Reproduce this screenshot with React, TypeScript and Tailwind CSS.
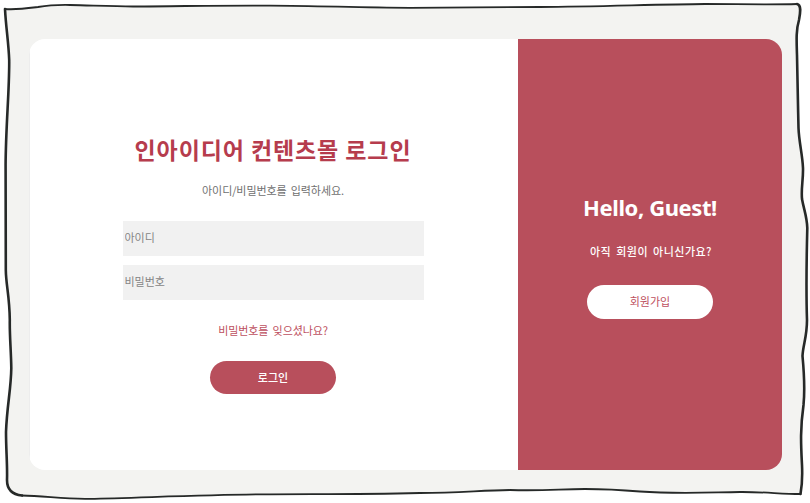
import React from "react";

const top =
  "5,9 C16,10 30,8 38,7 C50,5 60,4.8 70,5 C95,5.6 115,6.6 135,6.5 C180,6.3 225,5.2 270,5.6 C320,5.8 355,7.5 410,7.8 C450,7.8 500,7 540,7 C600,6.5 660,4.3 705,4 C735,4 770,4.8 797,4";
const right =
  "C802,5 800,14 799,20 C796,30 796.5,40 797,55 C797.5,85 798,105 798.5,128 C799,142 802.5,155 803,168 C803.3,180 801,188 802,199 C804,210 807,217 807.3,228 C806.5,260 806,290 807,320 C807,337 803,345 802.5,356 C804,372 805,390 803.5,405 C800,430 801,445 802,465 C802.5,476 802,486 800.5,494";
const bottom =
  "C780,494 765,491.8 740,492 C705,492.5 675,494 640,491.5 C620,489.8 605,489 585,489 C560,489 545,491 510,490 C480,490.3 460,493 420,493 C360,494.5 325,494 270,494.3 C210,494.5 135,498 90,498.8 C65,499.5 45,495.8 22,495.5";
const left =
  "C12,494.5 7,490 7,480 C7.5,465 6,450 6,432 C7,405 11,390 11.3,368 C11,350 9.5,335 9.8,320 C9.5,296 6,285 5.8,270 L5.6,165 C5.8,125 9.5,90 9.2,60 C8.5,42 6,28 5,9";

function SketchFrame() {
  return (
    <svg
      className="absolute inset-0 -z-10"
      width="810"
      height="503"
      fill="none"
      stroke="#262928"
      strokeLinecap="round"
    >
      <path d={`M${top} ${right} ${bottom} ${left} Z`} fill="#f3f3f1" stroke="none" />
      <path d={`M${top}`} strokeWidth="1.8" />
      <path d={`M797,4 ${right}`} strokeWidth="2.6" />
      <path d={`M800.5,494 ${bottom}`} strokeWidth="1.8" />
      <path d={`M22,495.5 ${left}`} strokeWidth="2.6" />
    </svg>
  );
}

function Field({ label, type }: { label: string; type: string }) {
  return (
    <input
      type={type}
      placeholder={label}
      className="block h-[35px] w-[301px] bg-[#f1f1f1] px-[2px] pb-[3px] text-[11px] placeholder:text-[#858585]"
    />
  );
}

export default function App() {
  return (
    <div className="relative isolate h-[503px] w-[810px] overflow-hidden bg-white pt-[39px] pl-[29px] font-['Noto_Sans_CJK_KR',sans-serif]">
      <SketchFrame />
      <main className="flex h-[431px] w-[753px] overflow-hidden rounded-[16px]">
        <section className="flex w-[489px] flex-col items-center border-l border-[#ededed] bg-white pt-[92px] pr-[2px]">
          <h1 className="h-9 text-[23px] leading-9 font-bold tracking-[0.9px] whitespace-nowrap text-[#b63c4d]">
            인아이디어 컨텐츠몰 로그인
          </h1>
          <p className="mt-[13px] h-5 text-[11px] leading-5 tracking-[-0.1px] text-[#707070] [word-spacing:2px]">
            아이디/비밀번호를 입력하세요.
          </p>
          <form className="mt-[21px] flex flex-col items-center" onSubmit={(e) => e.preventDefault()}>
            <div className="flex flex-col gap-[9px]">
              <Field label="아이디" type="text" />
              <Field label="비밀번호" type="password" />
            </div>
            <a
              href="#"
              className="mt-5 h-5 text-[11px] leading-5 tracking-[-0.1px] text-[#bd5060] [word-spacing:2px]"
            >
              비밀번호를 잊으셨나요?
            </a>
            <button className="mt-[21px] h-[33px] w-[126px] rounded-full bg-[#b84f5c] text-[11px] font-medium text-white">
              로그인
            </button>
          </form>
        </section>
        <aside className="flex flex-1 flex-col items-center bg-[#b84f5c] pt-[150px] text-white">
          <h2 className="h-9 font-['Noto_Sans',sans-serif] text-[22px] leading-9 font-bold tracking-[-0.4px] whitespace-nowrap">
            Hello, Guest!
          </h2>
          <p className="mt-4 h-5 pl-[2px] text-[11px] leading-5 font-medium tracking-[0.5px] [word-spacing:2px]">
            아직 회원이 아니신가요?
          </p>
          <button className="mt-6 h-[34px] w-[126px] rounded-full bg-white pb-[2px] text-[11px] text-[#bd5060]">
            회원가입
          </button>
        </aside>
      </main>
    </div>
  );
}
